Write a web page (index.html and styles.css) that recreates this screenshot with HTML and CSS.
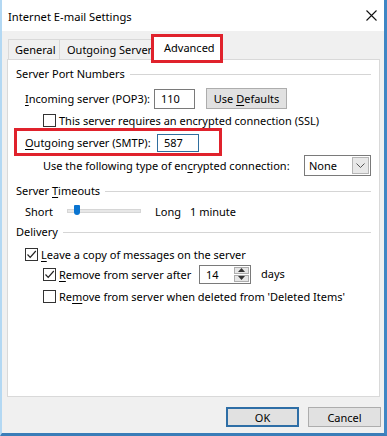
FILE: index.html
```html
<!DOCTYPE html>
<html lang="en">

<head>
    <meta charset="UTF-8" />
    <title>Internet E-mail Settings</title>
    <link rel="stylesheet" href="styles.css">
</head>

<body>
    <div class="window">
        <div class="titlebar">
            <span class="title">Internet E-mail Settings</span>
            <svg class="close" width="11" height="11" viewBox="0 0 11 11">
                <path d="M0.5 0.5 L10.5 10.5 M10.5 0.5 L0.5 10.5" stroke="#111" stroke-width="1.1" fill="none" />
            </svg>
        </div>
        <div class="content">
            <div class="tabs">
                <div class="tab tab-general">General</div>
                <div class="tab tab-outgoing">Outgoing Server</div>
                <div class="tab tab-active">Advanced</div>
            </div>
            <div class="panel">
                <div class="group"><span>Server Port Numbers</span></div>
                <div class="row row-incoming">
                    <span class="label label-in"><u>I</u>ncoming server (POP3):</span>
                    <div class="field field-in">110</div>
                    <button class="btn btn-defaults">Use <u>D</u>efaults</button>
                </div>
                <div class="row row-check row-ssl">
                    <span class="check"></span>
                    <span>This server requires an encrypted connection (SSL)</span>
                </div>
                <div class="row row-outgoing">
                    <span class="label label-out"><u>O</u>utgoing server (SMTP):</span>
                    <div class="field field-out">587</div>
                </div>
                <div class="row row-encrypt">
                    <span>Use the following type of en<u>c</u>rypted connection:</span>
                    <div class="select">
                        <span>None</span>
                        <span class="select-arrow">
                            <svg width="9" height="6" viewBox="0 0 9 6">
                                <path d="M0.5 0.5 L4.5 4.5 L8.5 0.5" stroke="#555" stroke-width="1" fill="none" />
                            </svg>
                        </span>
                    </div>
                </div>
                <div class="group group-timeouts"><span>Server <u>T</u>imeouts</span></div>
                <div class="row row-slider">
                    <span class="short">Short</span>
                    <div class="track"><span class="thumb"></span></div>
                    <span class="long">Long</span>
                    <span>1 minute</span>
                </div>
                <div class="group group-delivery"><span>Delivery</span></div>
                <div class="row row-check row-leave">
                    <span class="check checked">
                        <svg width="11" height="11" viewBox="0 0 11 11">
                            <path d="M1.5 5.5 L4.2 8.3 L9.8 2" stroke="#222" stroke-width="1.2" fill="none" />
                        </svg>
                    </span>
                    <span><u>L</u>eave a copy of messages on the server</span>
                </div>
                <div class="row row-check row-after">
                    <span class="check checked">
                        <svg width="11" height="11" viewBox="0 0 11 11">
                            <path d="M1.5 5.5 L4.2 8.3 L9.8 2" stroke="#222" stroke-width="1.2" fill="none" />
                        </svg>
                    </span>
                    <span class="after-label"><u>R</u>emove from server after</span>
                    <div class="spin">
                        <span class="spin-value">14</span>
                        <span class="spin-btns">
                            <span class="spin-up"><svg width="7" height="4" viewBox="0 0 7 4"><path d="M0 4 L3.5 0 L7 4 Z" fill="#333" /></svg></span>
                            <span class="spin-down"><svg width="7" height="4" viewBox="0 0 7 4"><path d="M0 0 L3.5 4 L7 0 Z" fill="#333" /></svg></span>
                        </span>
                    </div>
                    <span class="days">days</span>
                </div>
                <div class="row row-check row-deleted">
                    <span class="check"></span>
                    <span>Re<u>m</u>ove from server when deleted from 'Deleted Items'</span>
                </div>
            </div>
            <div class="footer">
                <button class="btn btn-ok">OK</button>
                <button class="btn btn-cancel">Cancel</button>
            </div>
        </div>
    </div>
</body>

</html>
```

FILE: styles.css
```css
body {
    margin: 0;
    font-family: "Noto Sans", Arial, sans-serif;
    font-size: 11px;
    color: #000;
    background: #fff;
}

u {
    text-decoration-thickness: 1px;
    text-underline-offset: 2px;
}

.window {
    box-sizing: border-box;
    width: 387px;
    height: 436px;
    background: #f0f0f0;
    border-left: 2px solid #b3d8f3;
    border-right: 3px solid #3f86c4;
    border-bottom: 3px solid #3a7db8;
    white-space: nowrap;
}

.titlebar {
    height: 31px;
    background: #fff;
    display: flex;
    align-items: center;
    padding-left: 6px;
    padding-right: 6px;
}

.title {
    flex: 1;
    font-size: 11.2px;
    margin-top: 1px;
}

.close {
    margin-right: 1px;
}

.content {
    padding: 0 4px 0 5px;
}

/* tabs */
.tabs {
    display: flex;
    align-items: flex-end;
    height: 28px;
    padding-left: 1px;
}

.tab {
    box-sizing: border-box;
    height: 20px;
    border: 1px solid #d9d9d9;
    border-bottom: none;
    padding-left: 6px;
    overflow: hidden;
    line-height: 20px;
    background: #f0f0f0;
}

.tab-general {
    width: 52px;
}

.tab-outgoing {
    width: 95px;
    border-left: none;
    padding-left: 7px;
}

.tab-active {
    position: relative;
    z-index: 2;
    width: 72px;
    height: 29px;
    margin-left: -4px;
    margin-bottom: -4px;
    border: 3px solid #e0222c;
    background: #fff;
    padding-left: 10px;
    line-height: 21px;
}

/* panel */
.panel {
    box-sizing: border-box;
    height: 338px;
    background: #fff;
    border: 1px solid #d9d9d9;
    padding: 6px 8px 0 8px;
}

.group {
    display: flex;
    align-items: center;
    height: 16px;
    line-height: 16px;
}

.group::after {
    content: "";
    flex: 1;
    height: 1px;
    background: #d5d5d5;
    margin-left: 5px;
}

.group-timeouts {
    margin-top: 7px;
}

.group-delivery {
    margin-top: 5px;
}

.row {
    display: flex;
    align-items: center;
}

.row > * {
    flex-shrink: 0;
}

.row-incoming {
    height: 21px;
    margin-top: 6px;
    padding-left: 9px;
}

.label-in {
    width: 129px;
}

.label-out {
    width: 132px;
}

.field {
    box-sizing: border-box;
    height: 20px;
    border: 1px solid #7a7a7a;
    padding-left: 6px;
    line-height: 18px;
}

.field-in {
    width: 41px;
}

.field-out {
    width: 42px;
    height: 18px;
    line-height: 16px;
    border-color: #2f6e9e;
    margin-top: 2px;
}

.btn {
    box-sizing: border-box;
    font-family: inherit;
    font-size: 11px;
    color: #000;
    background: #e1e1e1;
    border: 1px solid #adadad;
    padding: 0;
}

.btn-defaults {
    width: 81px;
    height: 21px;
    margin-left: 11px;
}

.row-check {
    padding-left: 27px;
}

.check {
    box-sizing: border-box;
    width: 13px;
    height: 13px;
    border: 1px solid #333;
    background: #fff;
    margin-right: 3px;
    display: flex;
    align-items: center;
    justify-content: center;
}

.row-ssl {
    height: 15px;
    margin-top: 4px;
}

.row-outgoing {
    box-sizing: border-box;
    width: 208px;
    height: 28px;
    margin-left: -2px;
    border: 3px solid #e0222c;
    padding-left: 8px;
}

.row-encrypt {
    height: 21px;
    margin-top: -1px;
    padding-left: 27px;
    justify-content: space-between;
}

.select {
    box-sizing: border-box;
    width: 67px;
    height: 21px;
    border: 1px solid #7a7a7a;
    display: flex;
    align-items: center;
    justify-content: space-between;
    padding-left: 4px;
    padding-right: 1px;
}

.select-arrow {
    box-sizing: border-box;
    width: 17px;
    height: 17px;
    background: #e8e8e8;
    border: 1px solid #b5b5b5;
    display: flex;
    align-items: center;
    justify-content: center;
}

.row-slider {
    height: 16px;
    margin-top: 4px;
    padding-left: 9px;
}

.short {
    width: 42px;
}

.track {
    position: relative;
    box-sizing: border-box;
    width: 74px;
    height: 4px;
    background: #e7e7e7;
    border: 1px solid #d6d6d6;
    margin-right: 14px;
}

.thumb {
    position: absolute;
    left: 6px;
    top: -5px;
    width: 6px;
    height: 10px;
    background: #0a74d0;
    border-radius: 1px 1px 3px 3px;
}

.long {
    width: 35px;
}

.row-leave {
    height: 16px;
    margin-top: 6px;
    padding-left: 9px;
}

.row-after {
    height: 20px;
    margin-top: 2px;
}

.after-label {
    width: 140px;
}

.spin {
    box-sizing: border-box;
    width: 52px;
    height: 19px;
    border: 1px solid #7a7a7a;
    display: flex;
    align-items: center;
    justify-content: space-between;
    padding-left: 6px;
    padding-right: 1px;
}

.spin-btns {
    display: flex;
    flex-direction: column;
    gap: 1px;
}

.spin-up,
.spin-down {
    box-sizing: border-box;
    width: 15px;
    height: 7px;
    background: #e6e6e6;
    border: 1px solid #adadad;
    display: flex;
    align-items: center;
    justify-content: center;
}

.days {
    margin-left: 10px;
    margin-top: -2px;
}

.row-deleted {
    height: 16px;
    margin-top: 4px;
}

/* buttons */
.footer {
    display: flex;
    justify-content: flex-end;
    gap: 9px;
    margin-top: 10px;
    margin-right: -1px;
}

.btn-ok,
.btn-cancel {
    width: 73px;
    height: 20px;
}

.btn-ok {
    border: 2px solid #2e6ea6;
}
```
